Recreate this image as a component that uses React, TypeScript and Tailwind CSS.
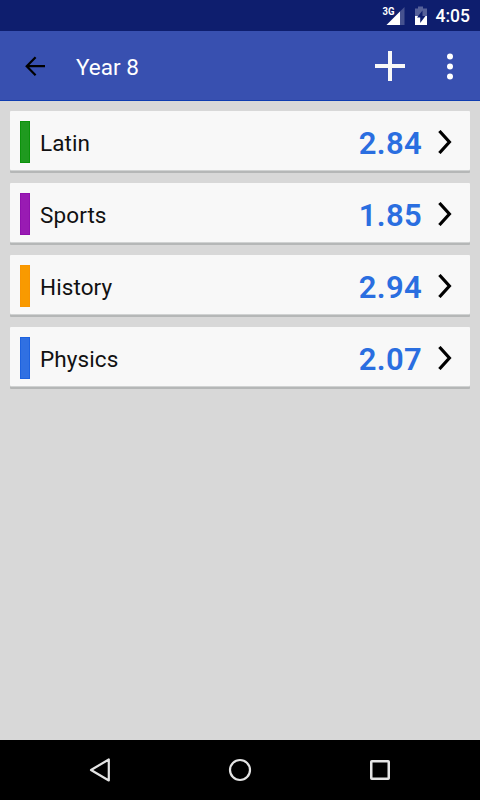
const subjects = [
  { name: "Latin", grade: "2.84", color: "bg-[#1f9a1f] border-[#0b930b]" },
  { name: "Sports", grade: "1.85", color: "bg-[#991bb3] border-[#9010ad]" },
  { name: "History", grade: "2.94", color: "bg-[#f99a00] border-[#f99500]" },
  { name: "Physics", grade: "2.07", color: "bg-[#3070e2] border-[#1d62df]" }
];

function StatusBar() {
  return (
    <div className="flex h-[31px] shrink-0 items-start bg-[#0e1e6e] pl-[382px] text-white">
      <svg className="h-[31px] w-[50px] shrink-0" viewBox="0 0 50 31">
        <text x="0.5" y="15" fontSize="10.5" fontWeight="700" fill="#fff" textLength="12" lengthAdjust="spacingAndGlyphs">
          3G
        </text>
        <path d="M22.5 7v18H4.5z" fill="#46528f" />
        <path d="M18 11.5V25H4.5z" fill="#fff" />
        <path d="M33 8.5h3V6.5h5v2h4V17H33z" fill="#566199" />
        <path d="M33 16h12v9H33z" fill="#fff" />
        <path d="M40.5 10.5l-5.5 7h3.2v5.5l5.3-7h-3z" fill="#0e1e6e" />
      </svg>
      <span className="ml-[3.5px] mt-[4px] text-[17.5px] font-medium leading-[24px]">4:05</span>
    </div>
  );
}

function Header() {
  return (
    <header className="flex h-[70px] shrink-0 items-center border-b border-[#103db0] bg-[#3850b0]">
      <svg className="ml-[25px] h-5 w-5" viewBox="0 0 20 20" fill="none" stroke="#000" strokeWidth="2.2">
        <path d="M20 10.2H2M10.6 1.2L1.7 10.2l8.9 9" />
      </svg>
      <h1 className="ml-[31px] mt-[2px] text-[22.5px] leading-7 text-white">Year 8</h1>
      <svg className="ml-auto h-8 w-8" viewBox="0 0 32 32" fill="#f8f8f8">
        <path d="M14 1h4v13h13v4H18v13h-4V18H1v-4h13z" />
      </svg>
      <svg className="ml-10 mr-[26px] h-8 w-2" viewBox="0 0 8 32" fill="#fff" overflow="visible">
        <circle cx="4" cy="6.5" r="3" />
        <circle cx="4" cy="16.5" r="3" />
        <circle cx="4" cy="26.5" r="3" />
      </svg>
    </header>
  );
}

export default function App() {
  return (
    <div className="flex h-screen w-full flex-col overflow-hidden bg-[#d8d8d8] font-['Roboto',sans-serif]">
      <StatusBar />
      <Header />

      <main className="flex-1 space-y-[13px] px-2.5 pt-2.5">
        {subjects.map((subject) => (
          <div
            key={subject.name}
            className="flex h-[59px] items-center rounded-[1px] bg-[#f8f8f8] px-2.5 shadow-[0_1px_0_#d0d2d2,0_3px_0_#b5b7b7]"
          >
            <div className={`mt-[3px] h-[42px] w-2.5 border ${subject.color}`} />
            <span className="ml-2.5 mt-[4px] text-[22.5px] leading-7 tracking-[0.1px] text-[#111]">{subject.name}</span>
            <span className="ml-auto mt-[7px] text-[31px] font-semibold leading-9 tracking-[0.3px] text-[#2a6ee0]">
              {subject.grade}
            </span>
            <svg
              className="ml-[15px] mr-[7px] mt-[3px] h-6 w-4"
              viewBox="0 0 16 24"
              fill="none"
              stroke="#000"
              strokeWidth="3.2"
            >
              <path d="M2.4 1l10 11L2.4 23" />
            </svg>
          </div>
        ))}
      </main>

      <nav className="flex h-[60px] shrink-0 items-center bg-black">
        <svg className="ml-[88px] h-6 w-6" viewBox="0 0 24 24" fill="none" stroke="#e4e4e4" strokeWidth="2.2" strokeLinejoin="round">
          <path d="M20.8 1.5v21L3 12z" />
        </svg>
        <svg className="ml-[116px] h-6 w-6" viewBox="0 0 24 24" fill="none" stroke="#e4e4e4" strokeWidth="2.2">
          <circle cx="12" cy="12" r="10" />
        </svg>
        <svg className="ml-[116px] h-6 w-6" viewBox="0 0 24 24" fill="none" stroke="#e4e4e4" strokeWidth="2.5">
          <rect x="3.25" y="3.25" width="17.5" height="17.5" rx="0.5" />
        </svg>
      </nav>
    </div>
  );
}
